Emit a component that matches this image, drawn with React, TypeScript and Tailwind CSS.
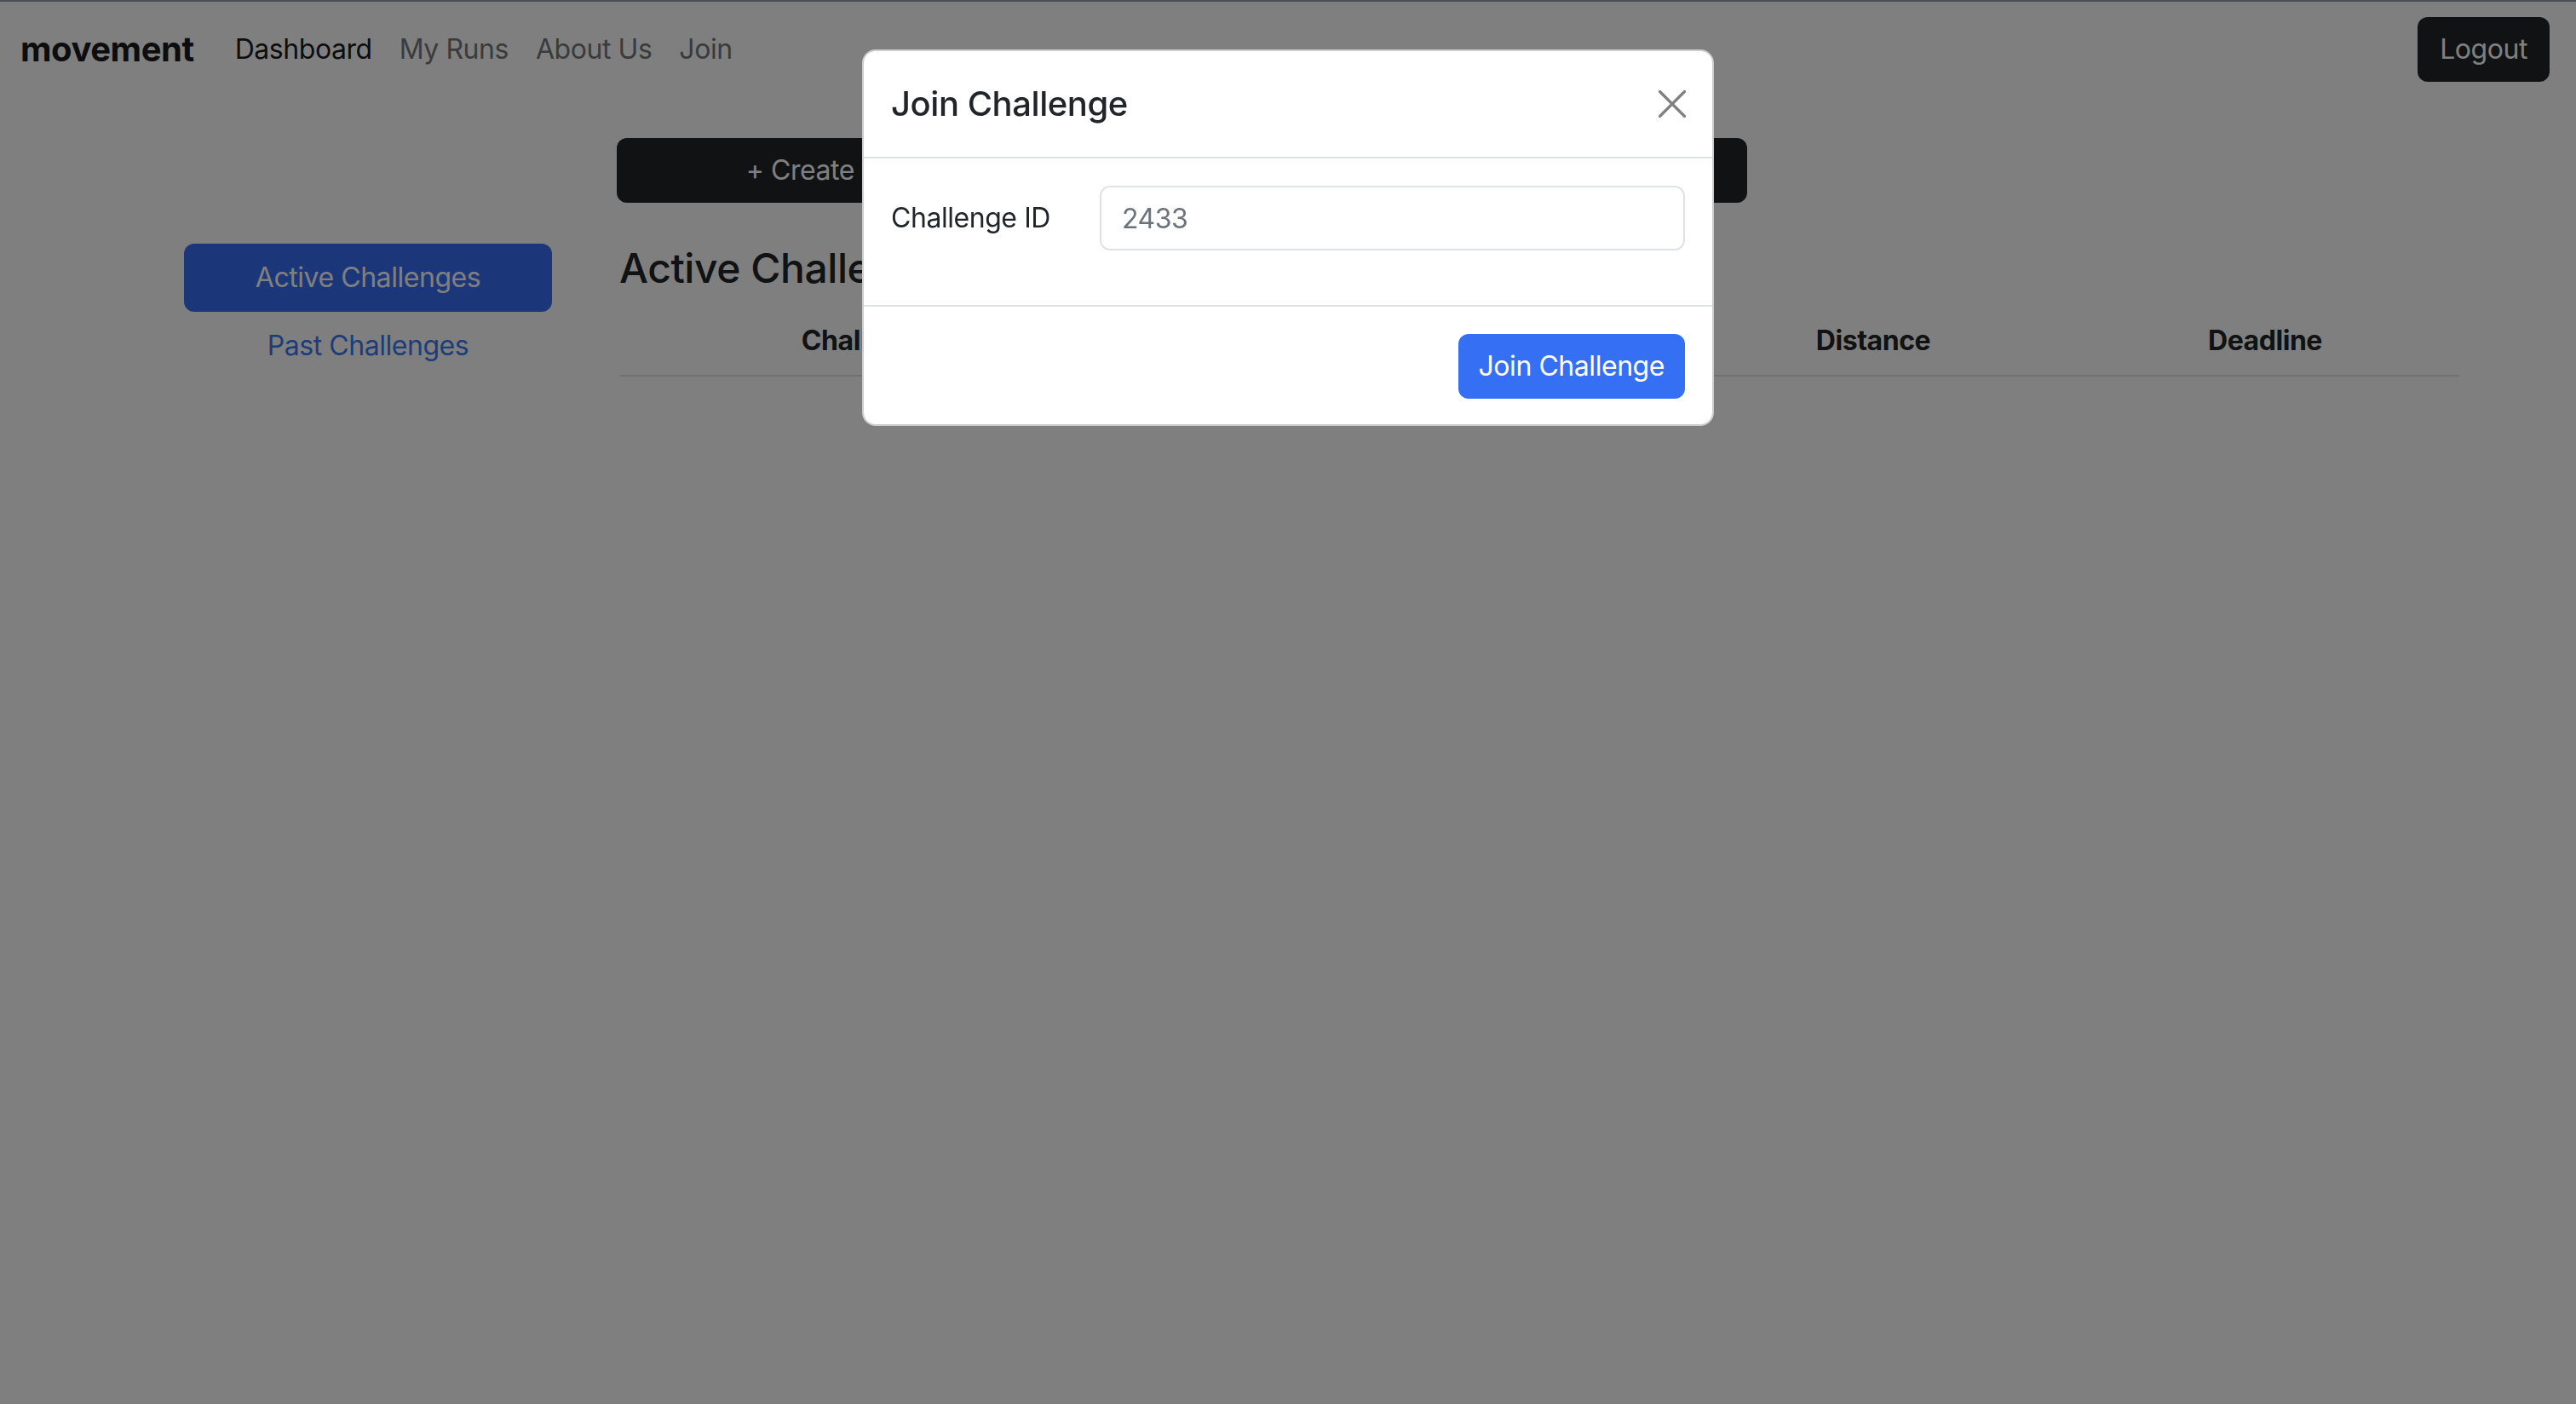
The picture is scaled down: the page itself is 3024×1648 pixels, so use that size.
import React from "react";

function CloseIcon() {
  return (
    <svg width="32" height="32" viewBox="0 0 32 32" fill="none">
      <path d="M1.5 1.5L30.5 30.5M30.5 1.5L1.5 30.5" stroke="#808080" strokeWidth="3.2" strokeLinecap="round" />
    </svg>
  );
}

export default function App() {
  return (
    <div className="relative min-h-screen w-full bg-white font-[Inter,sans-serif] tracking-[-0.028em] text-[#212529]">
      <div className="h-[2px] w-full bg-[#979fad]" />
      <nav className="flex items-center justify-between py-[18px] pl-[24px] pr-[31px]">
        <div className="flex items-center">
          <span className="mr-[32px] text-[40px] font-bold leading-[60px] text-[#1a1a1a]">movement</span>
          <div className="flex items-center text-[32px] leading-[48px]">
            <span className="px-[16px] text-[#1a1a1a]">Dashboard</span>
            <span className="px-[16px] text-[#777777]">My Runs</span>
            <span className="px-[16px] text-[#777777]">About Us</span>
            <span className="px-[16px] text-[#777777]">Join</span>
          </div>
        </div>
        <button className="h-[76px] rounded-[12px] bg-[#212529] px-[26px] text-[32px] leading-[48px] text-white">Logout</button>
      </nav>

      <div className="flex">
        <div className="w-[648px] shrink-0 pl-[216px] pt-[172px]">
          <div className="flex w-[432px] flex-col">
            <div className="flex h-[80px] items-center justify-center rounded-[12px] bg-[#366ef2] text-[32px] leading-[48px] text-white">
              Active Challenges
            </div>
            <div className="flex h-[80px] items-center justify-center text-[32px] leading-[48px] text-[#3a7af5]">
              Past Challenges
            </div>
          </div>
        </div>

        <div className="ml-[79px] flex flex-col pt-[48px]">
          <div className="-ml-[3px] flex h-[76px] w-[1327px] overflow-hidden rounded-[12px] bg-[#212529] text-[32px] leading-[48px] text-white">
            <div className="flex flex-1 items-center justify-center">+ Create New Challenge</div>
            <div className="flex flex-1 items-center justify-center border-l-2 border-[#373b3e]">Join Challenge</div>
          </div>
          <h4 className="mt-[48px] mb-[16px] text-[48px] font-medium leading-[58px]">Active Challenges</h4>
          <table className="w-[2160px] table-fixed border-collapse">
            <thead>
              <tr className="border-b-2 border-[#dee2e6]">
                <th className="w-[678px] py-[16px] text-center text-[32px] font-bold leading-[48px]">Challenge Name</th>
                <th className="w-[562px] py-[16px] text-center text-[32px] font-bold leading-[48px]">Participants</th>
                <th className="w-[464px] py-[16px] text-center text-[32px] font-bold leading-[48px]">Distance</th>
                <th className="w-[456px] py-[16px] text-center text-[32px] font-bold leading-[48px]">Deadline</th>
              </tr>
            </thead>
          </table>
        </div>
      </div>

      <div className="fixed inset-0 bg-black/50" />

      <div className="fixed inset-0 flex items-start justify-center">
        <div className="mt-[58px] w-[1000px] overflow-hidden rounded-[16px] border-2 border-black/20 bg-white">
          <div className="flex items-center justify-between border-b-2 border-[#dee2e6] px-[32px] py-[32px]">
            <h5 className="text-[40px] font-medium leading-[60px] text-[#212529]">Join Challenge</h5>
            <div className="mr-[-1px] flex h-[32px] w-[32px] items-center justify-center">
              <CloseIcon />
            </div>
          </div>
          <div className="px-[32px] pt-[32px] pb-[64px]">
            <div className="flex items-center">
              <label className="w-[245px] shrink-0 text-[32px] leading-[48px] text-[#212529]">Challenge ID</label>
              <input
                className="h-[76px] flex-1 rounded-[12px] border-2 border-[#dee2e6] bg-white px-[24px] text-[32px] leading-[48px] text-[#212529] outline-none placeholder:text-[#6c737b]"
                placeholder="2433"
              />
            </div>
          </div>
          <div className="flex justify-end border-t-2 border-[#dee2e6] px-[32px] pt-[32px] pb-[30px]">
            <button className="h-[76px] rounded-[12px] bg-[#356ff3] px-[24px] text-[32px] leading-[48px] text-white">Join Challenge</button>
          </div>
        </div>
      </div>
    </div>
  );
}
